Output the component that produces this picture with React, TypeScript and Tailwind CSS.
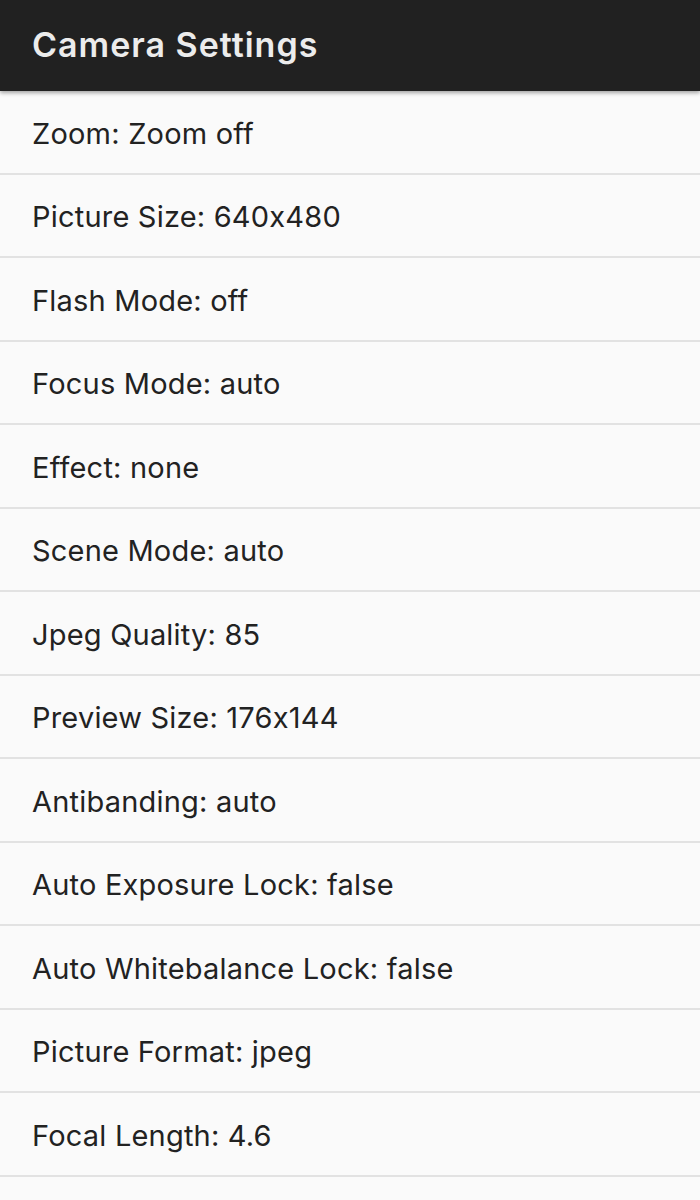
import React from "react";

const items = [
  "Zoom: Zoom off",
  "Picture Size: 640x480",
  "Flash Mode: off",
  "Focus Mode: auto",
  "Effect: none",
  "Scene Mode: auto",
  "Jpeg Quality: 85",
  "Preview Size: 176x144",
  "Antibanding: auto",
  "Auto Exposure Lock: false",
  "Auto Whitebalance Lock: false",
  "Picture Format: jpeg",
  "Focal Length: 4.6",
];

export default function App() {
  return (
    <div className="w-[700px] h-[1200px] overflow-hidden bg-[#fafafa] font-[Inter,'Noto_Sans',sans-serif]">
      <div className="relative z-10 h-[91px] bg-[#212121] flex items-center pl-[32px] pb-[2px] shadow-[0_2px_4px_rgba(0,0,0,0.35)]">
        <span className="text-[34px] font-semibold tracking-[1px] text-[#ececec] leading-none">
          Camera Settings
        </span>
      </div>
      <div className="flex flex-col">
        {items.map((t) => (
          <div
            key={t}
            className="h-[83.5px] shrink-0 flex items-center pl-[32px] pt-[3px] border-b-2 border-[#e2e2e2]"
          >
            <span className="text-[29px] tracking-[0.2px] text-[#222222] leading-none">{t}</span>
          </div>
        ))}
        <div className="h-[83.5px] shrink-0" />
      </div>
    </div>
  );
}
